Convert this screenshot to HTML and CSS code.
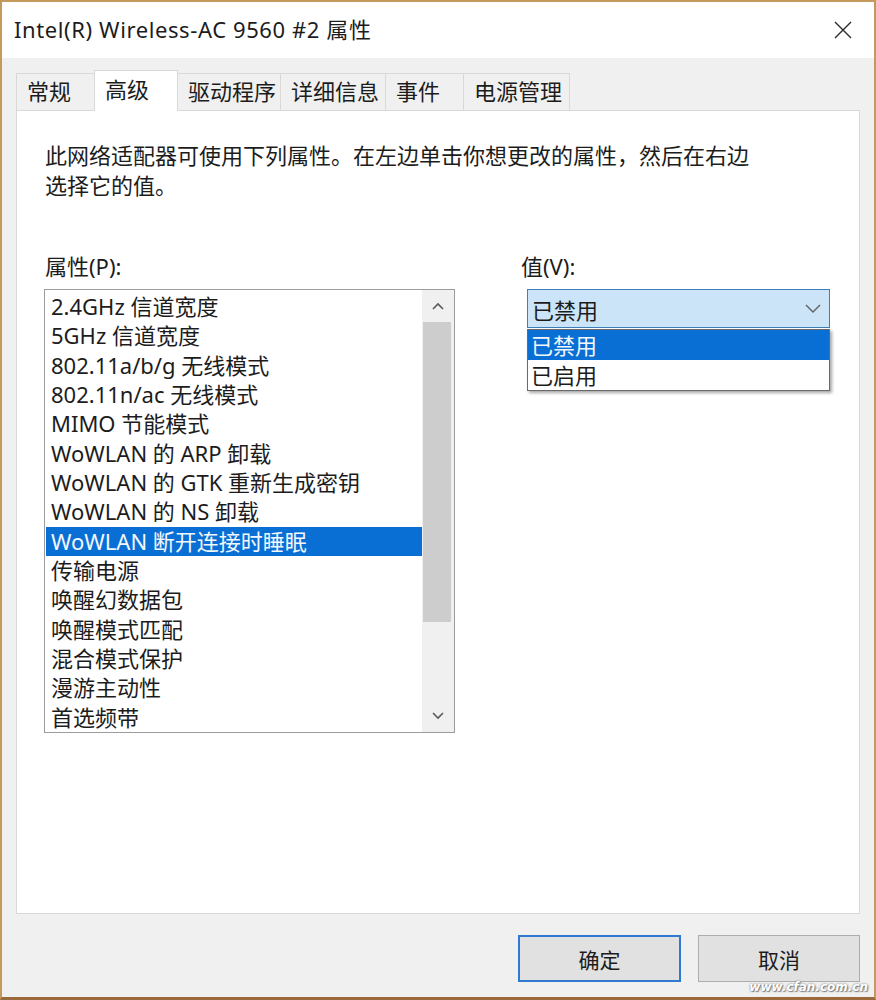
FILE: index.html
```html
<!DOCTYPE html>
<html lang="zh-CN">
<head>
  <meta charset="utf-8">
  <title>Intel(R) Wireless-AC 9560 #2 属性</title>
  <link rel="stylesheet" href="styles.css">
</head>
<body>
  <div class="window">
    <!-- Title bar -->
    <div class="titlebar">
      <span class="title">Intel(R) Wireless-AC 9560 #2 属性</span>
      <svg class="close" width="18" height="18" viewBox="0 0 18 18">
        <path d="M1 1 L17 17 M17 1 L1 17" stroke="#2b2b2b" stroke-width="1.4" fill="none"/>
      </svg>
    </div>

    <div class="dialog-body">
      <!-- Tabs -->
      <div class="tabs">
        <div class="tab">常规</div>
        <div class="tab active">高级</div>
        <div class="tab">驱动程序</div>
        <div class="tab">详细信息</div>
        <div class="tab">事件</div>
        <div class="tab">电源管理</div>
      </div>

      <div class="panel">
        <p class="desc">此网络适配器可使用下列属性。在左边单击你想更改的属性，然后在右边<br>选择它的值。</p>

        <div class="fields">
          <div class="prop-col">
            <div class="field-label">属性(P):</div>
            <div class="listbox">
              <ul class="items">
                <li>2.4GHz 信道宽度</li>
                <li>5GHz 信道宽度</li>
                <li>802.11a/b/g 无线模式</li>
                <li>802.11n/ac 无线模式</li>
                <li>MIMO 节能模式</li>
                <li>WoWLAN 的 ARP 卸载</li>
                <li>WoWLAN 的 GTK 重新生成密钥</li>
                <li>WoWLAN 的 NS 卸载</li>
                <li class="selected">WoWLAN 断开连接时睡眠</li>
                <li>传输电源</li>
                <li>唤醒幻数据包</li>
                <li>唤醒模式匹配</li>
                <li>混合模式保护</li>
                <li>漫游主动性</li>
                <li>首选频带</li>
              </ul>
              <div class="scrollbar">
                <div class="sb-btn">
                  <svg width="12" height="8" viewBox="0 0 12 8"><path d="M1 7 L6 2 L11 7" stroke="#5a5a5a" stroke-width="1.6" fill="none"/></svg>
                </div>
                <div class="sb-thumb"></div>
                <div class="sb-track"></div>
                <div class="sb-btn">
                  <svg width="12" height="8" viewBox="0 0 12 8"><path d="M1 1 L6 6 L11 1" stroke="#5a5a5a" stroke-width="1.6" fill="none"/></svg>
                </div>
              </div>
            </div>
          </div>

          <div class="value-col">
            <div class="field-label">值(V):</div>
            <div class="combo">
              <div class="combo-box">
                <span>已禁用</span>
                <svg width="16" height="9" viewBox="0 0 16 9"><path d="M1 1 L8 8 L15 1" stroke="#606060" stroke-width="1.4" fill="none"/></svg>
              </div>
              <ul class="dropdown">
                <li class="selected">已禁用</li>
                <li>已启用</li>
              </ul>
            </div>
          </div>
        </div>
      </div>

      <!-- Dialog buttons -->
      <div class="buttons">
        <button class="btn default">确定</button>
        <button class="btn">取消</button>
      </div>
    </div>

    <span class="watermark">www.cfan.com.cn</span>
  </div>
</body>
</html>
```

FILE: styles.css
```css
body {
  margin: 0;
  font-family: "Noto Sans", "Noto Sans CJK SC", sans-serif;
  color: #1c1c1c;
}

.window {
  position: relative;
  width: 876px;
  height: 1000px;
  box-sizing: border-box;
  border: 2px solid #c39a5c;
  border-bottom: 3px solid #9a6a3c;
  background-color: #f0f0f0;
}

.titlebar {
  height: 56px;
  box-sizing: border-box;
  background-color: #fff;
  display: flex;
  align-items: center;
  justify-content: space-between;
  padding: 0 22px 3px 12px;
}

.title {
  font-size: 22px;
  line-height: 30px;
  letter-spacing: 0.6px;
}

.close {
  display: block;
  margin-top: 2px;
}

.dialog-body {
  padding: 12px 14px 0 14px;
}

.tabs {
  display: flex;
  align-items: flex-end;
  height: 40px;
}

.tab {
  box-sizing: border-box;
  height: 37px;
  line-height: 35px;
  padding-left: 10px;
  font-size: 22px;
  border: 1px solid #d9d9d9;
  border-bottom: none;
  border-left: none;
  background-color: #f0f0f0;
}

.tab:first-child {
  border-left: 1px solid #d9d9d9;
}

.tab:nth-child(1) { width: 79px; }
.tab:nth-child(2) { width: 84px; }
.tab:nth-child(3) { width: 103px; }
.tab:nth-child(4) { width: 105px; }
.tab:nth-child(5) { width: 78px; }
.tab:nth-child(6) { width: 106px; }

.tab.active {
  position: relative;
  z-index: 1;
  height: 41px;
  line-height: 37px;
  margin-bottom: -1px;
  border-left: 1px solid #d9d9d9;
  margin-left: -1px;
  background-color: #fff;
}

.panel {
  height: 804px;
  box-sizing: border-box;
  border: 1px solid #d9d9d9;
  background-color: #fff;
  padding: 29px 0 0 27px;
}

.desc {
  margin: 0;
  font-size: 22px;
  line-height: 30px;
  padding-left: 1px;
}

.fields {
  display: flex;
  margin-top: 51px;
}

.field-label {
  font-size: 22px;
  line-height: 30px;
  margin-bottom: 8px;
  padding-left: 1px;
}

.listbox {
  width: 411px;
  height: 444px;
  box-sizing: border-box;
  border: 1px solid #9c9c9c;
  display: flex;
}

.items {
  list-style: none;
  margin: 0;
  padding: 2px 0 0 0;
  flex-grow: 1;
  overflow: hidden;
}

.items li {
  height: 29.33px;
  line-height: 29.33px;
  font-size: 22px;
  padding-left: 5px;
  margin-left: 1px;
  white-space: nowrap;
}

.items li.selected {
  background-color: #0a6fd4;
  color: #f2f7fc;
}

.scrollbar {
  width: 32px;
  background-color: #f0f0f0;
  display: flex;
  flex-direction: column;
}

.sb-btn {
  height: 32px;
  display: flex;
  align-items: center;
  justify-content: center;
}

.sb-thumb {
  height: 300px;
  margin: 0 3px 0 1px;
  background-color: #cdcdcd;
}

.sb-track {
  flex-grow: 1;
}

.value-col {
  margin-left: 65px;
}

.combo {
  position: relative;
  margin-left: 7px;
  width: 303px;
}

.combo-box {
  height: 39px;
  box-sizing: border-box;
  border: 1px solid #3d7fb8;
  background-color: #cce4f7;
  display: flex;
  align-items: center;
  justify-content: space-between;
  padding: 0 8px 0 4px;
  font-size: 22px;
}

.dropdown {
  position: absolute;
  left: 0;
  right: 0;
  top: 40px;
  margin: 0;
  padding: 0;
  list-style: none;
  background-color: #fff;
  border: 1px solid #6a6a6a;
  box-shadow: 2px 2px 3px rgba(0, 0, 0, 0.35);
}

.dropdown li {
  height: 30px;
  line-height: 30px;
  font-size: 22px;
  padding-left: 3px;
}

.dropdown li.selected {
  background-color: #0a6fd4;
  color: #f2f7fc;
}

.buttons {
  display: flex;
  justify-content: flex-end;
  gap: 17px;
  margin-top: 21px;
}

.btn {
  width: 162px;
  height: 47px;
  box-sizing: border-box;
  font-family: "Noto Sans", "Noto Sans CJK SC", sans-serif;
  font-size: 21px;
  color: #1c1c1c;
  background-color: #e1e1e1;
  border: 1px solid #adadad;
  padding: 0;
}

.btn.default {
  width: 163px;
  border: 2px solid #2f7ad0;
}

.watermark {
  position: absolute;
  right: 6px;
  bottom: 3px;
  font-family: "DejaVu Sans", sans-serif;
  font-size: 12px;
  font-style: italic;
  font-weight: bold;
  color: #fff;
  text-shadow: 0 0 2px #666, 1px 1px 1px #888;
}
```
